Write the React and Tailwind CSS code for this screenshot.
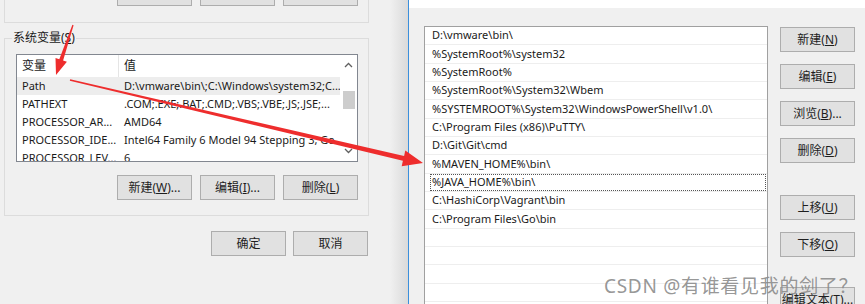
const font = { fontFamily: '"Noto Sans", "Noto Sans CJK SC", sans-serif' };

const sysVars = [
  ["Path", "D:\\vmware\\bin\\;C:\\Windows\\system32;C..."],
  ["PATHEXT", ".COM;.EXE;.BAT;.CMD;.VBS;.VBE;.JS;.JSE;..."],
  ["PROCESSOR_AR...", "AMD64"],
  ["PROCESSOR_IDE...", "Intel64 Family 6 Model 94 Stepping 3, Ge..."],
  ["PROCESSOR_LEV...", "6"],
];

const paths = [
  "D:\\vmware\\bin\\",
  "%SystemRoot%\\system32",
  "%SystemRoot%",
  "%SystemRoot%\\System32\\Wbem",
  "%SYSTEMROOT%\\System32\\WindowsPowerShell\\v1.0\\",
  "C:\\Program Files (x86)\\PuTTY\\",
  "D:\\Git\\Git\\cmd",
  "%MAVEN_HOME%\\bin\\",
  "%JAVA_HOME%\\bin\\",
  "C:\\HashiCorp\\Vagrant\\bin",
  "C:\\Program Files\\Go\\bin",
  "",
  "",
  "",
  "",
  "",
];

const Btn = ({ children, className = "" }) => (
  <button
    className={`h-[25px] w-[75px] shrink-0 border border-[#adadad] bg-[#e1e1e1] text-[12px] leading-none text-[#1e1e1e] ${className}`}
  >
    {children}
  </button>
);

const Key = ({ k }) => <span className="underline">{k}</span>;

const Chevron = ({ down }) => (
  <svg width="9" height="6" viewBox="0 0 9 6">
    <polyline
      points={down ? "1,1 4.5,4.5 8,1" : "1,5 4.5,1.5 8,5"}
      fill="none"
      stroke="#606060"
      strokeWidth="1.3"
    />
  </svg>
);

export default function App() {
  return (
    <div
      className="relative flex h-[304px] w-[865px] overflow-hidden bg-[#f0f0f0] text-[#1a1a1a]"
      style={font}
    >
      {/* left dialog: environment variables */}
      <div className="flex w-[408px] shrink-0">
        <div className="w-[390px] pl-[4px]">
          <div className="flex h-[23px] w-[365px] justify-end gap-[8px] border-x border-b border-[#dcdcdc] pr-[10px]">
            <Btn className="-mt-[19px]" />
            <Btn className="-mt-[19px]" />
            <Btn className="-mt-[19px]" />
          </div>

          <div className="mt-[15px] h-[178px] w-[365px] border border-[#dcdcdc]">
            <div className="-mt-[9px] ml-[7px] w-fit bg-[#f0f0f0] px-[1px] text-[12px] leading-[16px]">
              系统变量(<Key k="S" />)
            </div>

            <div className="ml-[11px] mt-[8px] flex h-[108px] w-[342px] overflow-hidden border border-[#828790] bg-white text-[11px]">
              <div className="w-[323px]">
                <div className="flex h-[22px] items-center text-[12px]">
                  <div className="h-full w-[102px] border-r border-[#e5e5e5] pl-[5px] leading-[22px]">变量</div>
                  <div className="pl-[5px]">值</div>
                </div>
                {sysVars.map(([name, value], i) => (
                  <div
                    key={name}
                    className={`flex h-[18px] items-center whitespace-nowrap ${i === 0 ? "bg-[#ededed]" : ""}`}
                  >
                    <div className="w-[102px] overflow-hidden pl-[5px]">{name}</div>
                    <div className="w-[221px] overflow-hidden pl-[5px]">{value}</div>
                  </div>
                ))}
              </div>
              <div className="flex w-[17px] flex-col items-center bg-white pt-[7px]">
                <Chevron />
                <div className="mt-[23px] h-[18px] w-[12px] bg-[#cdcdcd]" />
                <div className="mt-[39px]">
                  <Chevron down />
                </div>
              </div>
            </div>

            <div className="mt-[13px] flex justify-end gap-[8px] pr-[10px]">
              <Btn>新建(<Key k="W" />)...</Btn>
              <Btn>编辑(<Key k="I" />)...</Btn>
              <Btn>删除(<Key k="L" />)</Btn>
            </div>
          </div>

          <div className="mt-[15px] flex w-[365px] justify-end gap-[7px] pr-[1px]">
            <Btn>确定</Btn>
            <Btn>取消</Btn>
          </div>
        </div>
        <div className="w-[18px] bg-gradient-to-r from-[#f0f0f0] to-[#dadada]" />
      </div>

      {/* right dialog: edit path */}
      <div className="flex-1 border-l border-[#3b8fdc]">
        <div className="h-[8px] bg-white" />
        <div className="flex items-start">
          <div className="ml-[15px] mt-[18px] h-[300px] w-[344px] border border-[#a0a0a0] bg-white text-[11px]">
            {paths.map((p, i) => (
              <div
                key={i}
                className="flex h-[18.33px] items-center border-b border-[#eeeeee] pl-[7px] whitespace-nowrap"
              >
                {i === 8 ? (
                  <div className="-ml-[2px] flex h-full w-[336px] items-center border border-dotted border-[#555] pl-[1px]">
                    {p}
                  </div>
                ) : (
                  p
                )}
              </div>
            ))}
          </div>
          <div className="ml-[12px] mt-[19px] flex flex-col">
            <Btn>新建(<Key k="N" />)</Btn>
            <Btn className="mt-[12px]">编辑(<Key k="E" />)</Btn>
            <Btn className="mt-[12px]">浏览(<Key k="B" />)...</Btn>
            <Btn className="mt-[12px]">删除(<Key k="D" />)</Btn>
            <Btn className="mt-[32px]">上移(<Key k="U" />)</Btn>
            <Btn className="mt-[12px]">下移(<Key k="O" />)</Btn>
            <Btn className="mt-[30px]">编辑文本(<Key k="T" />)...</Btn>
          </div>
        </div>
      </div>

      {/* red annotation arrows */}
      <svg className="pointer-events-none absolute left-0 top-0" width="865" height="304">
        <polygon
          points="73.6,25.2 63.1,60.4 66.9,61.7 56,75 55.5,57.9 59.3,59.2 72.4,24.8"
          fill="#ee2d2d"
        />
        <polygon
          points="70.2,79.3 404.1,156 405.3,150.6 423,163 401.7,166.2 402.9,160.8 69.8,80.7"
          fill="#ee2d2d"
        />
      </svg>

      <div className="pointer-events-none absolute left-[604px] top-[274px] whitespace-nowrap text-[19px] leading-[24px] tracking-[0.7px] text-[#8a8a8a]/90">
        CSDN @有谁看见我的剑了？
      </div>
    </div>
  );
}
